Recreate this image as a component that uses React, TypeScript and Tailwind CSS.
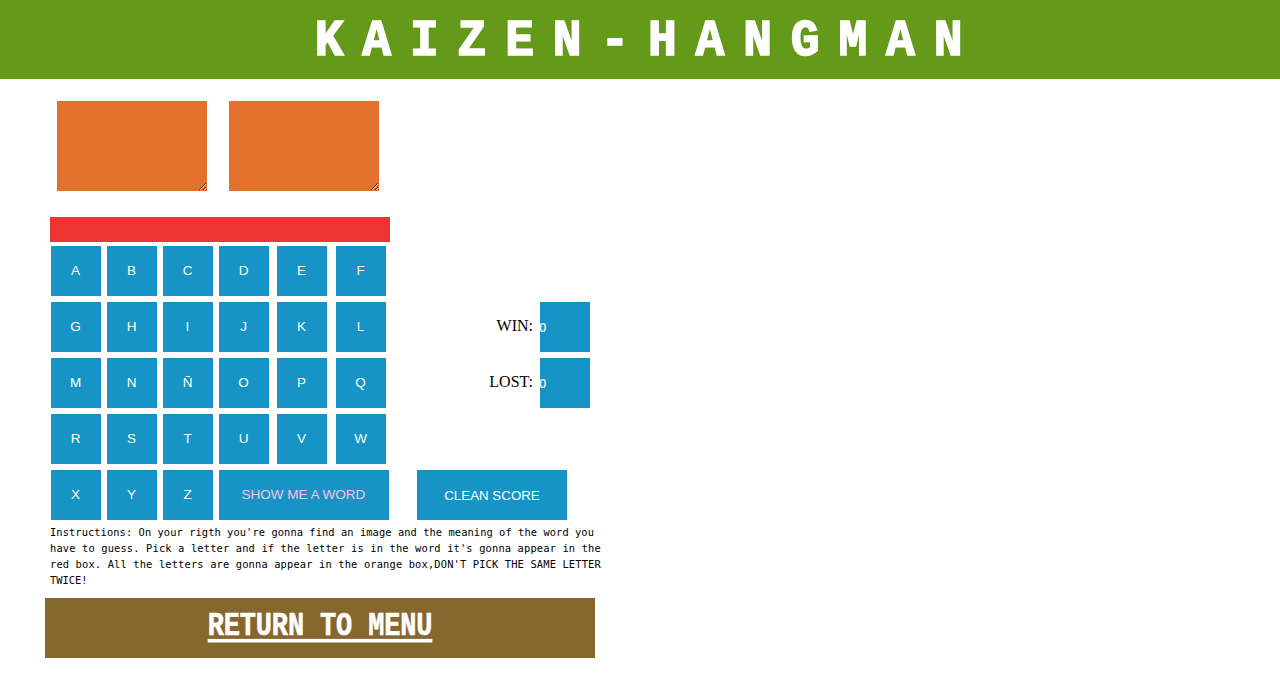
const rows = [
  ["A", "B", "C", "D", "E", "F"],
  ["G", "H", "I", "J", "K", "L"],
  ["M", "N", "Ñ", "O", "P", "Q"],
  ["R", "S", "T", "U", "V", "W"],
];

function Key({ label }: { label: string }) {
  return (
    <button className="w-[50px] h-[50px] pt-[1px] pr-[1px] bg-[#1793c6] text-white text-[13.5px] font-['Liberation_Sans',sans-serif] flex items-center justify-center">
      {label}
    </button>
  );
}

function Score({ label }: { label: string }) {
  return (
    <div className="flex items-center h-[50px]">
      <span className="w-[147px] text-right text-[16px] leading-[18px] -mt-[3px] text-black font-['Liberation_Serif',serif]">
        {label}
      </span>
      <div className="ml-[7px] w-[50px] h-[50px] bg-[#1793c6] flex items-center text-[#e4f5fb] text-[13px] font-medium font-['Roboto',sans-serif]">
        <span className="mt-[1px] -ml-[1px]">0</span>
      </div>
    </div>
  );
}

export default function App() {
  return (
    <div className="w-[1280px] h-[692px] bg-white overflow-hidden">
      <header className="h-[79px] bg-[#65991a] flex items-center justify-center">
        <h1 className="ml-[16px] mt-[3px] text-[48px] leading-none font-bold text-white tracking-[18.8px] scale-y-[1.08] [-webkit-text-stroke:1.5px_white] font-['Liberation_Mono',monospace]">
          KAIZEN-HANGMAN
        </h1>
      </header>
      <div className="flex gap-[22px] pl-[57px] pt-[22px]">
        <textarea className="block w-[150px] h-[90px] bg-[#e1712c] resize outline-none" />
        <textarea className="block w-[150px] h-[90px] bg-[#e1712c] resize outline-none" />
      </div>
      <div className="ml-[50px] mt-[26px] w-[340px] h-[25px] bg-[#ee3532]" />
      <div className="ml-[51px] mt-[4px] flex flex-col gap-[6px]">
        {rows.map((row, i) => (
          <div key={i} className="flex">
            <div className="w-[335px] grid grid-cols-[56px_56px_56px_58px_59px_50px]">
              {row.map((l) => (
                <Key key={l} label={l} />
              ))}
            </div>
            {i === 1 && <Score label="WIN:" />}
            {i === 2 && <Score label="LOST:" />}
          </div>
        ))}
        <div className="flex">
          <div className="grid grid-cols-[56px_56px_56px]">
            <Key label="X" />
            <Key label="Y" />
            <Key label="Z" />
          </div>
          <button className="w-[170px] h-[50px] pt-[1px] pr-[1px] bg-[#1793c6] text-[#f6c6e0] text-[13.5px] font-['Liberation_Sans',sans-serif]">
            SHOW ME A WORD
          </button>
          <button className="ml-[28px] w-[150px] h-[50px] pt-[1px] bg-[#1793c6] text-white text-[13.33px] font-['Liberation_Sans',sans-serif]">
            CLEAN SCORE
          </button>
        </div>
      </div>
      <div className="ml-[50px] mt-[4px] w-[560px] text-[10.4px] leading-[16px] text-black whitespace-nowrap font-['DejaVu_Sans_Mono',monospace]">
        <p className="tracking-[0.07px]">Instructions: On your rigth you're gonna find an image and the meaning of the word you</p>
        <p className="tracking-[0.15px]">have to guess. Pick a letter and if the letter is in the word it's gonna appear in the</p>
        <p className="tracking-[0.15px]">red box. All the letters are gonna appear in the orange box,DON'T PICK THE SAME LETTER</p>
        <p>TWICE!</p>
      </div>
      <div className="ml-[45px] mt-[10px] w-[550px] h-[60px] bg-[#86672e] flex items-center justify-center">
        <a className="-mt-[2px] text-white font-bold text-[27px] leading-none tracking-[-0.15px] underline decoration-[3px] underline-offset-[3px] scale-y-[1.2] [-webkit-text-stroke:0.5px_white] font-['Liberation_Mono',monospace]">
          RETURN TO MENU
        </a>
      </div>
    </div>
  );
}
